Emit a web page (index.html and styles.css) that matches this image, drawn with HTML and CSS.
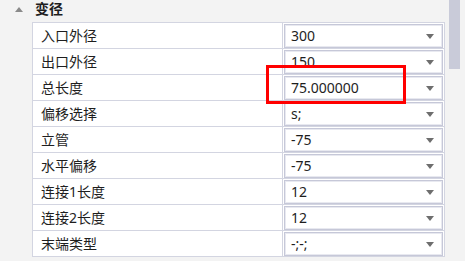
FILE: index.html
```html
<!DOCTYPE html>
<html lang="zh">
<head>
    <meta charset="UTF-8">
    <title>变径属性</title>
    <link rel="stylesheet" href="styles.css">
</head>
<body>
    <div class="panel">
        <div class="group-header">
            <span class="collapse-icon"></span>
            <span class="group-title">变径</span>
        </div>

        <div class="prop-grid">
            <div class="prop-row">
                <div class="prop-name">入口外径</div>
                <div class="prop-value"><div class="combo"><span>300</span><i class="combo-arrow"></i></div></div>
            </div>
            <div class="prop-row">
                <div class="prop-name">出口外径</div>
                <div class="prop-value"><div class="combo"><span>150</span><i class="combo-arrow"></i></div></div>
            </div>
            <div class="prop-row">
                <div class="prop-name">总长度</div>
                <div class="prop-value"><div class="combo"><span>75.000000</span><i class="combo-arrow"></i></div></div>
            </div>
            <div class="prop-row">
                <div class="prop-name">偏移选择</div>
                <div class="prop-value"><div class="combo"><span>s;</span><i class="combo-arrow"></i></div></div>
            </div>
            <div class="prop-row">
                <div class="prop-name">立管</div>
                <div class="prop-value"><div class="combo"><span>-75</span><i class="combo-arrow"></i></div></div>
            </div>
            <div class="prop-row">
                <div class="prop-name">水平偏移</div>
                <div class="prop-value"><div class="combo"><span>-75</span><i class="combo-arrow"></i></div></div>
            </div>
            <div class="prop-row">
                <div class="prop-name">连接1长度</div>
                <div class="prop-value"><div class="combo"><span>12</span><i class="combo-arrow"></i></div></div>
            </div>
            <div class="prop-row">
                <div class="prop-name">连接2长度</div>
                <div class="prop-value"><div class="combo"><span>12</span><i class="combo-arrow"></i></div></div>
            </div>
            <div class="prop-row last">
                <div class="prop-name">末端类型</div>
                <div class="prop-value"><div class="combo"><span>-;-;</span><i class="combo-arrow"></i></div></div>
            </div>
        </div>

        <!-- 红框标注 -->
        <div class="highlight-box"></div>
        <div class="scroll-thumb"></div>
    </div>
</body>
</html>
```

FILE: styles.css
```css
body {
    margin: 0;
    background-color: #f3f3f3;
    font-family: 'Noto Sans', 'Noto Sans CJK SC', sans-serif;
    font-size: 14px;
    color: #1e1e1e;
}
.panel {
    position: relative;
    width: 465px;
    height: 261px;
    overflow: hidden;
}
.group-header {
    height: 22px;
    display: flex;
    align-items: center;
}
.collapse-icon {
    width: 0;
    height: 0;
    margin-left: 15px;
    margin-right: 12px;
    margin-top: -3px;
    border-left: 4px solid transparent;
    border-right: 4px solid transparent;
    border-bottom: 5px solid #8a8a8a;
}
.group-title {
    font-weight: bold;
    line-height: 22px;
    margin-top: -4px;
}
.prop-grid {
    margin-left: 32px;
    width: 413px;
    border-bottom: 1px solid #d3d5e1;
}
.prop-row {
    display: grid;
    grid-template-columns: 249px 162px;
    height: 25px;
    background-color: #fff;
    border-top: 1px solid #d3d5e1;
    border-left: 1px solid #d3d5e1;
    border-right: 1px solid #d3d5e1;
}
.prop-name {
    padding-left: 8px;
    line-height: 25px;
    white-space: nowrap;
}
.prop-value {
    border-left: 1px solid #d3d5e1;
    padding: 1px 1px 0 1px;
}
.combo {
    box-sizing: border-box;
    height: 24px;
    display: flex;
    align-items: center;
    justify-content: space-between;
    padding: 0 8px 0 6px;
    border: 1px solid #c6c8d8;
    box-shadow: inset 0 0 0 1px #e8e9f0;
    line-height: 22px;
}
.combo-arrow {
    width: 0;
    height: 0;
    border-left: 4px solid transparent;
    border-right: 4px solid transparent;
    border-top: 5px solid #6e6e6e;
}
.highlight-box {
    position: absolute;
    left: 266px;
    top: 65px;
    width: 134px;
    height: 33px;
    border: 3px solid #ff0000;
}
.scroll-thumb {
    position: absolute;
    left: 449px;
    top: 0;
    width: 11px;
    height: 69px;
    background-color: #c9cbd9;
}
```
